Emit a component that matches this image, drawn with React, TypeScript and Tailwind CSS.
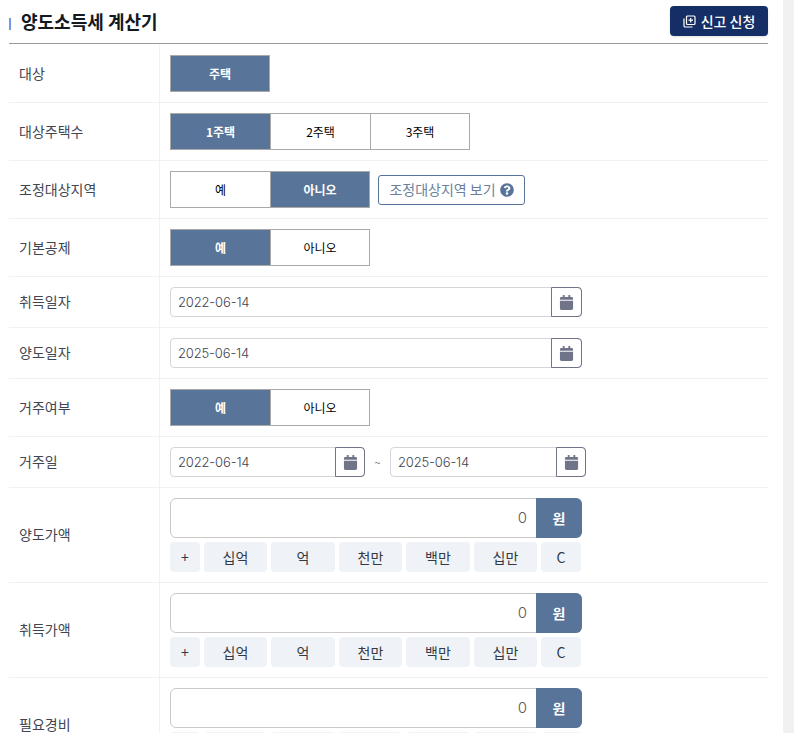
import type { ReactNode } from 'react';
import { FaCalendar, FaQuestionCircle } from 'react-icons/fa';

const KR = "font-['Noto_Sans_CJK_KR','Noto_Sans',sans-serif]";
const LATIN = "font-['Inter','Noto_Sans_CJK_KR',sans-serif]";
const UNITS = ['+', '십억', '억', '천만', '백만', '십만', 'C'];
const UNIT_WIDTHS = ['w-[30px]', 'w-[63px]', 'w-[64px]', 'w-[63px]', 'w-[64px]', 'w-[63px]', 'w-[40px]'];

function Row({ label, children }: { label: string; children: ReactNode }) {
  return (
    <div className="flex border-b border-[#eff1f6]">
      <div className="flex w-[151px] shrink-0 items-center border-r border-[#eff1f6] pb-[1px] pl-[10px] text-[14px] font-normal text-[#3f4652]">
        {label}
      </div>
      <div className="flex-1 py-[10px] pl-[10px]">{children}</div>
    </div>
  );
}

function Toggle({ options, active }: { options: string[]; active: number }) {
  return (
    <div className="flex">
      {options.map((o, i) => {
        const last = i === options.length - 1;
        return (
          <button
            key={o}
            type="button"
            className={`h-[37px] border border-[#a9a9a9] text-[12px] ${last ? 'w-[100px]' : 'w-[101px]'} ${i > 0 ? 'ml-[-1px]' : ''} ${
              i === active ? 'bg-[#587498] font-bold text-white' : 'bg-white font-normal text-black'
            }`}
          >
            {o}
          </button>
        );
      })}
    </div>
  );
}

function DateInput({ value, width, btn = 'w-[31px]' }: { value: string; width: string; btn?: string }) {
  return (
    <div className={`flex h-[30px] ${width} rounded-[4px] border border-[#d5d6da] bg-white`}>
      <div className={`flex flex-1 items-center pt-[1px] pl-[7px] text-[13px] font-light tracking-[-0.15px] text-[#3f4350] ${LATIN}`}>
        {value}
      </div>
      <div className={`mt-[-1px] mr-[-1px] mb-[-1px] flex ${btn} items-center justify-center rounded-r-[4px] border border-[#6f7488]`}>
        <FaCalendar className="text-[15px] text-[#6f7488]" />
      </div>
    </div>
  );
}

function MoneyInput() {
  return (
    <div className="w-[412px]">
      <div className="flex h-[40px] rounded-[6px] border border-[#c9c9c9]">
        <div className={`flex flex-1 items-center justify-end pr-[9px] text-[15px] font-light text-[#5f5650] ${LATIN}`}>0</div>
        <div className="mt-[-1px] mr-[-1px] mb-[-1px] flex w-[46px] items-center justify-center rounded-r-[6px] bg-[#587498] text-[14px] font-bold text-white">
          원
        </div>
      </div>
      <div className="mt-[4px] flex gap-[4px]">
        {UNITS.map((u, i) => (
          <button
            key={u}
            type="button"
            className={`h-[30px] ${UNIT_WIDTHS[i]} rounded-[4px] bg-[#eff2f7] text-[14px] text-[#333a46]`}
          >
            {u}
          </button>
        ))}
      </div>
    </div>
  );
}

export default function App() {
  return (
    <div className={`flex h-[733px] overflow-hidden bg-white ${KR}`}>
      <div className="w-[783px] shrink-0 pr-[15px] pl-[9px]">
        <div className="mb-[1px] flex h-[44px] items-center justify-between border-b border-[#9a9a9a]">
          <h1 className="relative pl-[12px] text-[18px] font-bold text-[#14181f]">
            <span className="absolute top-[10px] left-0 h-[12px] w-[2px] bg-[#6f97e8]" />
            양도소득세 계산기
          </h1>
          <button
            type="button"
            className="mt-[-1px] flex h-[30px] w-[98px] items-center justify-center gap-[5px] rounded-[4px] bg-[#152f66] text-[14px] font-medium text-white shadow-sm"
          >
            <svg width="13" height="13" viewBox="0 0 13 13" fill="none" stroke="currentColor" strokeWidth="1.2">
              <rect x="3.5" y="1" width="8.5" height="8.5" rx="1" />
              <path d="M7.7 3v4.5M5.5 5.2h4.5" />
              <path d="M1 3.5v7.2a1.3 1.3 0 0 0 1.3 1.3h7.2" />
            </svg>
            신고 신청
          </button>
        </div>

        <Row label="대상">
          <Toggle options={['주택']} active={0} />
        </Row>
        <Row label="대상주택수">
          <Toggle options={['1주택', '2주택', '3주택']} active={0} />
        </Row>
        <Row label="조정대상지역">
          <div className="flex items-center gap-[8px]">
            <Toggle options={['예', '아니오']} active={1} />
            <button
              type="button"
              className="flex h-[30px] w-[147px] items-center justify-center gap-[4px] rounded-[3px] border border-[#587498] text-[14px] text-[#6b7f9c]"
            >
              조정대상지역 보기
              <FaQuestionCircle className="text-[14px] text-[#587498]" />
            </button>
          </div>
        </Row>
        <Row label="기본공제">
          <Toggle options={['예', '아니오']} active={0} />
        </Row>
        <Row label="취득일자">
          <DateInput value="2022-06-14" width="w-[412px]" />
        </Row>
        <Row label="양도일자">
          <DateInput value="2025-06-14" width="w-[412px]" />
        </Row>
        <Row label="거주여부">
          <Toggle options={['예', '아니오']} active={0} />
        </Row>
        <Row label="거주일">
          <div className="flex items-center">
            <DateInput value="2022-06-14" width="w-[195px]" btn="w-[30px]" />
            <span className="w-[25px] text-center text-[11px] text-[#6f7488]">~</span>
            <DateInput value="2025-06-14" width="w-[196px]" btn="w-[30px]" />
          </div>
        </Row>
        <Row label="양도가액">
          <MoneyInput />
        </Row>
        <Row label="취득가액">
          <MoneyInput />
        </Row>
        <Row label="필요경비">
          <MoneyInput />
        </Row>
      </div>
      <div className="w-[11px] shrink-0 bg-[#f1f1f1]" />
    </div>
  );
}
